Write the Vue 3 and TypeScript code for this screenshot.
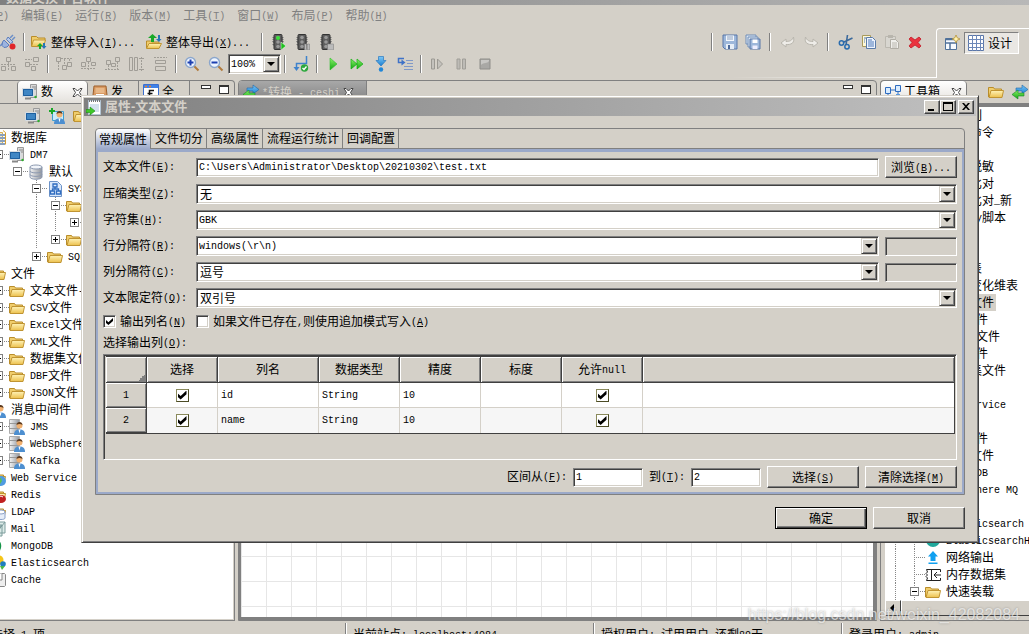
<script setup lang="ts">
import { h, ref, type FunctionalComponent } from 'vue'

/** Mixed CJK / Latin text; "&" marks the mnemonic letter that follows it. */
const Txt: FunctionalComponent<{ t: string }> = (props) =>
  h(
    'span',
    { class: 'txt' },
    props.t
      .split(/([\x20-\x7e]+)/)
      .filter((s) => s.length > 0)
      .map((s) => {
        if (!/^[\x20-\x7e]/.test(s)) return s
        const i = s.indexOf('&')
        return h('span', { class: 'lat' }, i < 0 ? s : [s.slice(0, i), h('u', s[i + 1]), s.slice(i + 2)])
      }),
  )
Txt.props = ['t']

const Ic: FunctionalComponent<{ n: string }> = (props) =>
  h('svg', { class: 'ic', viewBox: '0 0 16 16', 'aria-hidden': 'true' }, [h('use', { href: '#i-' + props.n })])
Ic.props = ['n']

interface Node { d: number; t: string; icon: string; exp?: string; g?: number[]; sel?: boolean; line?: boolean }

const menus = ['文件(&P)', '编辑(&E)', '运行(&R)', '版本(&M)', '工具(&T)', '窗口(&W)', '布局(&P)', '帮助(&H)']
const alignIcons = ['al3', 'al4', 'al5', 'al6', 'al7']
const runIcons = ['play', 'ff', 'down', 'step']
const haltIcons = ['resume', 'pause', 'stop']

const source: Node[] = [
  { d: 0, t: '数据库', icon: 'db' },
  { d: 1, t: 'DM7', icon: 'pc', exp: '-' },
  { d: 2, t: '默认', icon: 'disk', exp: '-' },
  { d: 3, t: 'SYSDBA', icon: 'schema', exp: '-', line: true },
  { d: 4, t: '表', icon: 'folder', exp: '-', g: [3], line: true },
  { d: 5, t: '', icon: 'folder', exp: '+', g: [3, 4] },
  { d: 4, t: '视图', icon: 'folder', exp: '+', g: [3] },
  { d: 3, t: 'SQL', icon: 'folder', exp: '+' },
  { d: 0, t: '文件', icon: 'folder' },
  { d: 1, t: '文本文件-GBK', icon: 'folder', exp: '+' },
  { d: 1, t: 'CSV文件', icon: 'folder', exp: '+' },
  { d: 1, t: 'Excel文件', icon: 'folder', exp: '+' },
  { d: 1, t: 'XML文件', icon: 'folder', exp: '+' },
  { d: 1, t: '数据集文件', icon: 'folder', exp: '+' },
  { d: 1, t: 'DBF文件', icon: 'folder', exp: '+' },
  { d: 1, t: 'JSON文件', icon: 'folder', exp: '+' },
  { d: 0, t: '消息中间件', icon: 'user' },
  { d: 1, t: 'JMS', icon: 'srvuser', exp: '+' },
  { d: 1, t: 'WebSphere MQ', icon: 'srvuser', exp: '+' },
  { d: 1, t: 'Kafka', icon: 'srvuser', exp: '+' },
  { d: 0, t: 'Web Service', icon: 'web' },
  { d: 0, t: 'Redis', icon: 'redis' },
  { d: 0, t: 'LDAP', icon: 'ldap' },
  { d: 0, t: 'Mail', icon: 'mail' },
  { d: 0, t: 'MongoDB', icon: 'mongo' },
  { d: 0, t: 'Elasticsearch', icon: 'elastic' },
  { d: 0, t: 'Cache', icon: 'cache' },
]

const toolNames = ['多序列', '系统命令', '合并', '数据脱敏', '数据比对', '数据比对_新', 'Groovy脚本', '过滤', '汇总', '维度表',
  '缓慢变化维表', '文本文件', 'CSV文件', 'Excel文件', 'XML文件', '数据集文件', 'LDAP', 'WebService', 'Redis', 'XML文件',
  'JSON文件', 'MongoDB', 'WebSphere MQ', 'Kafka', 'Elasticsearch', 'ElasticsearchHttp', '网络输出', '内存数据集', '快速装载']
const toolIcon: Record<string, string> = { 网络输出: 'upload', 内存数据集: 'memory', 快速装载: 'folder', ElasticsearchHttp: 'teal' }
const tools: Node[] = toolNames.map((t, i) => ({
  d: 1, t, icon: toolIcon[t] ?? 'page', g: [0], line: true, sel: t === '文本文件', exp: i === toolNames.length - 1 ? '-' : '',
}))

const tabs = ['常规属性', '文件切分', '高级属性', '流程运行统计', '回调配置']
const activeTab = ref(0)
const path = ref('C:\\Users\\Administrator\\Desktop\\20210302\\test.txt')
const combos = ref([
  { id: 'zip', label: '压缩类型(&Z):', value: '无', extra: false },
  { id: 'charset', label: '字符集(&H):', value: 'GBK', extra: false },
  { id: 'rowsep', label: '行分隔符(&R):', value: 'windows(\\r\\n)', extra: true },
  { id: 'colsep', label: '列分隔符(&C):', value: '逗号', extra: true },
  { id: 'quote', label: '文本限定符(&Q):', value: '双引号', extra: false },
])
const outNames = ref(true)
const append = ref(false)
const heads = ['选择', '列名', '数据类型', '精度', '标度', '允许null']
const rows = ref([
  { on: true, name: 'id', type: 'String', len: '10', scale: '', nul: true },
  { on: true, name: 'name', type: 'String', len: '10', scale: '', nul: true },
])
const from = ref('1')
const to = ref('2')
const isLatin = (s: string) => /^[\x20-\x7e]+$/.test(s)
</script>

<template>
  <div class="app">
    <svg class="defs" aria-hidden="true">
      <defs>
        <linearGradient id="gy" x1="0" y1="0" x2="0" y2="1"><stop offset="0" stop-color="#fff3b8" /><stop offset="1" stop-color="#ecc04c" /></linearGradient>
        <linearGradient id="gg" x1="0" y1="0" x2="0" y2="1"><stop offset="0" stop-color="#8bf06a" /><stop offset="1" stop-color="#12a812" /></linearGradient>
        <linearGradient id="gb" x1="0" y1="0" x2="0" y2="1"><stop offset="0" stop-color="#7cc8f8" /><stop offset="1" stop-color="#1b7fd0" /></linearGradient>
        <linearGradient id="gs" x1="0" y1="0" x2="1" y2="0"><stop offset="0" stop-color="#f4f4f4" /><stop offset="1" stop-color="#8f949c" /></linearGradient>
      </defs>
      <symbol id="i-folder" viewBox="0 0 16 16"><path d="M.500 13V3.500h5l1 1.500h7V8" fill="#f0cd6c" stroke="#b98d2b" /><path d="M1 13.500L3 6.500h12.500L14 13.500z" fill="url(#gy)" stroke="#c09432" /></symbol>
      <symbol id="i-import" viewBox="0 0 16 16"><path d="M.500 12V2.500h5L7 4h7v2" fill="#f0cd6c" stroke="#b98d2b" /><path d="M.500 12.500L2.500 6h12l-2 6.500z" fill="url(#gy)" stroke="#c09432" /><path d="M9 9l3 3h-2v3H8v-3H6z" fill="#18a828" /><path d="M13 15l-2.500-3H12V9h2v3h1.500z" fill="#2676b8" /></symbol>
      <symbol id="i-export" viewBox="0 0 16 16"><path d="M.500 14V7h4L6 8h7v1.500" fill="#f0cd6c" stroke="#b98d2b" /><path d="M.500 14.500L3 9.500h12.500L13 14.500z" fill="url(#gy)" stroke="#c09432" /><path d="M6.500 0L11 4H8v4H5V4H2z" fill="#18a828" /><path d="M13 8l-3-3h2V1h2v4h1.500z" fill="#2676b8" /></symbol>
      <symbol id="i-plug" viewBox="0 0 16 16"><path d="M0 12l3-3M6 2M13 1l-3 3M15 3l-3 3" stroke="#6c8fc8" stroke-width="1.500" /><path d="M8 3l5 5-2.500 1.500-4-4z" fill="#b7c9ea" stroke="#5d7dba" /><path d="M4 6l5 5-2 2-3 .500-2-2L2.500 8z" fill="#9cb4e0" stroke="#5d7dba" /><circle cx="12.500" cy="12.500" r="3" fill="#e0252a" /></symbol>
      <symbol id="i-light" viewBox="0 0 16 16"><path d="M2 3h12l-2 2h2l-2 2h2l-2 3h2l-2 2H4L2 10h2L2 7h2L2 5h2z" fill="#777" /><rect x="4" y=".5" width="8" height="15" rx="1" fill="#5d5d5d" stroke="#333" /><circle cx="8" cy="3.500" r="1.800" fill="#999" /><circle cx="8" cy="8" r="1.800" fill="#999" /><circle cx="8" cy="12.500" r="1.800" fill="#999" /></symbol>
      <symbol id="i-light1" viewBox="0 0 16 16"><use href="#i-light" /><circle cx="8" cy="4" r="2" fill="#38e038" /><path d="M11 8l5 4-5 4z" fill="#1fc01f" stroke="#fff" stroke-width=".5" /></symbol>
      <symbol id="i-light2" viewBox="0 0 16 16"><use href="#i-light" /><path d="M10.500 10h2v6h-2zM13.500 10h2v6h-2z" fill="#bbb" stroke="#777" stroke-width=".5" /></symbol>
      <symbol id="i-light3" viewBox="0 0 16 16"><use href="#i-light" /><rect x="9.500" y="10" width="6" height="6" fill="#bbb" stroke="#777" stroke-width=".5" /></symbol>
      <symbol id="i-save" viewBox="0 0 16 16"><path d="M1 1h14v14H3l-2-2z" fill="#9db7da" stroke="#5876a8" /><rect x="4" y="1.500" width="8" height="5.500" fill="#f3f7fc" /><path d="M5 3h6M5 5h6" stroke="#8ca0bf" /><rect x="4" y="10" width="8" height="5" fill="#e7eef6" /><rect x="6" y="11" width="2" height="4" fill="#4b6899" /></symbol>
      <symbol id="i-saveall" viewBox="0 0 16 16"><path d="M1 1h10v9H1z" fill="#dce6f2" stroke="#6f8db8" /><path d="M3 3h10v10H3z" fill="#dce6f2" stroke="#6f8db8" /><path d="M5 5h10v10H5z" fill="#9db7da" stroke="#5876a8" /><path d="M7.500 5.500h5V9h-5z" fill="#fff" /><path d="M7.500 11.500h5V15h-5z" fill="#eef" /></symbol>
      <symbol id="i-undo" viewBox="0 0 16 16"><path d="M1 9l5-4v2.500c4 0 6-1 7.500-4.500C15 9 11 11 6 10.500V13z" fill="#eeece8" stroke="#b9b6ae" /></symbol>
      <symbol id="i-redo" viewBox="0 0 16 16"><path d="M15 9l-5-4v2.500c-4 0-6-1-7.500-4.500C1 9 5 11 10 10.500V13z" fill="#eeece8" stroke="#b9b6ae" /></symbol>
      <symbol id="i-cut" viewBox="0 0 16 16"><path d="M9.500 1L8 11M14.500 4L5 8.500" stroke="#3c6a9c" stroke-width="1.600" /><circle cx="3.500" cy="9" r="2.200" fill="none" stroke="#2a6cae" stroke-width="1.500" /><circle cx="9" cy="12.700" r="2.200" fill="none" stroke="#2a6cae" stroke-width="1.500" /></symbol>
      <symbol id="i-copy" viewBox="0 0 16 16"><path d="M1.500 1.500h8v11h-8z" fill="#fff8d8" stroke="#a89a5c" /><path d="M5.500 3.500h6l3 3v8h-9z" fill="#eef4ff" stroke="#5a7ba8" /><path d="M7 6h4M7 8h6M7 10h6M7 12h6M3 4h2M3 6h1M3 8h1" stroke="#4d79b8" /></symbol>
      <symbol id="i-paste" viewBox="0 0 16 16"><path d="M1.500 2.500h10v11h-10z" fill="#d8d6d0" stroke="#bbb8b0" /><path d="M4 1h5v3H4z" fill="#b8b5ad" /><path d="M6.500 5.500h5l3 3v6h-8z" fill="#f0efec" stroke="#b0ada5" /><path d="M8 9h5M8 11h5M8 13h5" stroke="#b9b6ae" /></symbol>
      <symbol id="i-del" viewBox="0 0 16 16"><path d="M4 3l4 3 4-3 2 2-3 3.500 3 3.500-2 2-4-3-4 3-2-2 3-3.500L2 5z" fill="#ea3440" stroke="#c01c28" stroke-width=".8" /></symbol>
      <symbol id="i-persp" viewBox="0 0 16 16"><path d="M1.500 3.500h11v11h-11z" fill="#f8fbff" stroke="#50729a" /><path d="M1 4.500h12M1.500 8h11M6 8v6.500" stroke="#50729a" stroke-width="1.500" /><path d="M12 0l1.200 2.800L16 4l-2.800 1.200L12 8l-1.200-2.800L8 4l2.800-1.200z" fill="#fff2b0" stroke="#b08a28" stroke-width=".7" /></symbol>
      <symbol id="i-grid" viewBox="0 0 16 16"><path d="M.500.500h15v15H.500z" fill="#fff" stroke="#5b76a8" /><path d="M4.500 0v16M8.500 0v16M12.500 0v16M0 4.500h16M0 8.500h16M0 12.500h16" stroke="#6d88b8" /></symbol>
      <symbol id="i-al1" viewBox="0 0 16 16"><g fill="none" stroke="#a09d96"><path d="M6.500 1.500h4v4h-4zM1.500 10.500h4v4h-4zM11.500 10.500h4v4h-4z" /><path d="M1 8.500h14M8.500 6v9" stroke-dasharray="2 1" /></g></symbol>
      <symbol id="i-al2" viewBox="0 0 16 16"><g fill="none" stroke="#a09d96"><path d="M9.500 1.500h5v4h-5zM1.500 6.500h4v4h-4zM7.500 10.500h4v4h-4z" /><path d="M6 8.500h9M1 3.500h7" stroke-dasharray="2 1" /></g></symbol>
      <symbol id="i-al3" viewBox="0 0 16 16"><g fill="none" stroke="#a09d96"><path d="M.500 1.500h4v4h-4zM6.500 9.500h4v4h-4zM11.500 6.500h4v4h-4z" /><path d="M5 2.500h11M2.500 6v9M13.500 3v3M8.500 3v6" stroke-dasharray="2 1" /></g></symbol>
      <symbol id="i-al4" viewBox="0 0 16 16"><g fill="none" stroke="#a09d96"><path d="M6.500 1.500h4v4h-4zM1.500 6.500h4v4h-4zM11.500 6.500h4v3h-4z" /><path d="M1 12.500h15M8.500 6v9" stroke-dasharray="2 1" /></g></symbol>
      <symbol id="i-al5" viewBox="0 0 16 16"><g fill="none" stroke="#a09d96"><path d="M2.500 4.500h4v4h-4zM11.500 1.500h4v4h-4zM7.500 7.500h4v3h-4z" /><path d="M1 13.500h15M4.500 9v5M13.500 6v8" stroke-dasharray="2 1" /></g></symbol>
      <symbol id="i-al6" viewBox="0 0 16 16"><g fill="none" stroke="#a09d96"><path d="M1.500 1.500h3v13h-3zM6.500 1.500h3v13h-3z" /><path d="M13.500 1v14M11 2.500h5M11 13.500h5" stroke-dasharray="2 1" /></g></symbol>
      <symbol id="i-al7" viewBox="0 0 16 16"><g fill="none" stroke="#a09d96"><path d="M3.500 4.500h10v3h-10zM3.500 10.500h10v4h-10z" /><path d="M2 1.500h13" stroke-dasharray="2 1" /></g></symbol>
      <symbol id="i-zin" viewBox="0 0 16 16"><path d="M9.500 9.500l5 5" stroke="#b07a3c" stroke-width="2" /><circle cx="6.500" cy="6.500" r="5" fill="#eef5ff" stroke="#8ba6cc" stroke-width="1.400" /><path d="M3.500 6.500h6M6.500 3.500v6" stroke="#1c3fb0" stroke-width="2" /></symbol>
      <symbol id="i-zout" viewBox="0 0 16 16"><path d="M9.500 9.500l5 5" stroke="#b07a3c" stroke-width="2" /><circle cx="6.500" cy="6.500" r="5" fill="#eef5ff" stroke="#8ba6cc" stroke-width="1.400" /><path d="M3.500 6.500h6" stroke="#1c3fb0" stroke-width="2" /></symbol>
      <symbol id="i-route" viewBox="0 0 16 16"><path d="M13.500 0v7.500h-10V12" fill="none" stroke="#3f82cc" stroke-width="1.500" /><path d="M.500 11h6l-3 4z" fill="#3f82cc" /><circle cx="11.500" cy="12" r="3.700" fill="#2ca83c" /><path d="M9.500 12l1.500 1.500 2.500-3" fill="none" stroke="#fff" stroke-width="1.300" /></symbol>
      <symbol id="i-play" viewBox="0 0 16 16"><path d="M5 2l7 6-7 6z" fill="url(#gg)" stroke="#2cc02c" stroke-width=".6" /></symbol>
      <symbol id="i-ff" viewBox="0 0 16 16"><path d="M2 3l6 5-6 5zM8 3l6 5-6 5z" fill="url(#gg)" stroke="#12b012" stroke-width=".7" /></symbol>
      <symbol id="i-down" viewBox="0 0 16 16"><path d="M5.500.500h5v4H13L8 10 3 4.500h2.500z" fill="url(#gb)" stroke="#2a78c0" stroke-width=".7" /><circle cx="8" cy="13.500" r="2.200" fill="#1f86d8" /></symbol>
      <symbol id="i-step" viewBox="0 0 16 16"><path d="M7 2.500H1.500v4H5" fill="none" stroke="#3f72c8" stroke-width="1.500" /><path d="M4.500 3.500l4 3-4 3z" fill="#3f72c8" /><path d="M9 4.500h7M10 7.500h6M7 10.500h9M7 13.500h9" stroke="#8099c8" /></symbol>
      <symbol id="i-resume" viewBox="0 0 16 16"><path d="M2.500 3h3v10h-3zM8.500 3l5 5-5 5z" fill="#c4c2bd" stroke="#9b9993" /></symbol>
      <symbol id="i-pause" viewBox="0 0 16 16"><path d="M4 3h3v10H4zM9.500 3h3v10h-3z" fill="#bdbbb6" stroke="#a09e98" /></symbol>
      <symbol id="i-stop" viewBox="0 0 16 16"><path d="M3 3h10v10H3z" fill="#a9a8a5" stroke="#8f8e8a" /><path d="M4 9c3-3 6-1 8-4V4H4z" fill="#c8c7c4" /></symbol>
      <symbol id="i-pc" viewBox="0 0 16 16"><path d="M8.500.500h6v13h-6z" fill="#d9d9d9" stroke="#9a9a9a" /><path d="M10 3h4M10 5h4" stroke="#888" /><path d="M.500 4.500h11v8H.500z" fill="#3f86c4" stroke="#d8dde2" /><path d="M1.500 5.500h9v6h-9z" fill="none" stroke="#1e5f9e" /><path d="M3 14.500h6" stroke="#888" stroke-width="2" /><circle cx="13.500" cy="13" r="1.200" fill="#2db02d" /></symbol>
      <symbol id="i-adduser" viewBox="0 0 16 16"><path d="M3.500 3.500h11v9h-11z" fill="#c9ecfa" stroke="#3d9ed0" /><use href="#i-man" /><path d="M3 0v6M0 3h6" stroke="#18a828" stroke-width="2" /></symbol>
      <symbol id="i-man" viewBox="0 0 16 16"><circle cx="10.500" cy="6.500" r="3" fill="#f0b070" /><path d="M7.500 6c0-4 6-4 6 0-2-1.500-4-1.500-6 0z" fill="#5a3a20" /><path d="M5 16c0-4 2-5.500 5.500-5.500S16 12 16 16z" fill="#4d8fd0" /><path d="M9.500 10.500h2l-1 4z" fill="#fff" /></symbol>
      <symbol id="i-user" viewBox="0 0 16 16"><use href="#i-man" /></symbol>
      <symbol id="i-srvuser" viewBox="0 0 16 16"><path d="M.500.500h10v14h-10z" fill="url(#gs)" stroke="#aaa" /><path d="M0 4.500h11M0 9.500h11" stroke="#999" /><use href="#i-man" /></symbol>
      <symbol id="i-db" viewBox="0 0 16 16"><path d="M5.500 2.500h7v12h-7z" fill="#f6ecc8" stroke="#d8b050" /><path d="M9 5h6M9 8h6M9 11h6M9 14h6" stroke="#8aa0bc" stroke-width="2" /><path d="M13 .500l2.500 2v12" stroke="#d8a030" fill="none" /></symbol>
      <symbol id="i-disk" viewBox="0 0 16 16"><path d="M2 3v10c0 3 12 3 12 0V3z" fill="url(#gs)" stroke="#8c99b0" /><ellipse cx="8" cy="3" rx="6" ry="2" fill="#f2f5fa" stroke="#8c99b0" /><path d="M2 7c0 2.500 12 2.500 12 0M2 10.500c0 2.500 12 2.500 12 0" fill="none" stroke="#8c99b0" /></symbol>
      <symbol id="i-schema" viewBox="0 0 16 16"><path d="M2.500.500h8l4 4v11h-12z" fill="#dbe9fb" stroke="#6d93c8" /><path d="M6 3h4v3H6zM3.500 10h4v3h-4zM9.500 10h4v3h-4zM8 6v2M5.500 10V8h6v2" fill="none" stroke="#2f6cc0" stroke-width="1.300" /></symbol>
      <symbol id="i-web" viewBox="0 0 16 16"><use href="#i-folder" /><circle cx="11" cy="11" r="5" fill="#4f9be0" /><path d="M8 9l3-1 1 3-2 3z" fill="#5fc04f" /></symbol>
      <symbol id="i-redis" viewBox="0 0 16 16"><use href="#i-folder" /><ellipse cx="11" cy="12" rx="5" ry="4" fill="#c02020" /><path d="M8 10l3-1 2 1" stroke="#fff" fill="none" /></symbol>
      <symbol id="i-ldap" viewBox="0 0 16 16"><use href="#i-folder" /><path d="M7 8v6c0 2 8 2 8 0V8" fill="#e6edf8" stroke="#8aa0c8" /><ellipse cx="11" cy="8" rx="4" ry="2" fill="#fff" stroke="#8aa0c8" /></symbol>
      <symbol id="i-mail" viewBox="0 0 16 16"><path d="M8 1h7v11H8zM5 4h7v11H5z" fill="#dcebe8" stroke="#7d9c9c" /><path d="M8 1l3 5 4-5M5 4l4 5 3-5" fill="none" stroke="#7d9c9c" /></symbol>
      <symbol id="i-mongo" viewBox="0 0 16 16"><path d="M9 2c3 4 3 8 0 12-3-4-3-8 0-12z" fill="#159448" /></symbol>
      <symbol id="i-elastic" viewBox="0 0 16 16"><circle cx="9" cy="5" r="4.500" fill="#f5c518" /><circle cx="13" cy="9" r="2.800" fill="#1f7fc0" /><path d="M10 11h5l-3 4z" fill="#4cb848" /></symbol>
      <symbol id="i-cache" viewBox="0 0 16 16"><path d="M2.500 1.500h12l1 1v11l-1 1h-12z" fill="#eee" stroke="#888" /><path d="M6 1.500V8h6V1.500" fill="#fff" stroke="#888" /></symbol>
      <symbol id="i-page" viewBox="0 0 16 16"><path d="M2.500.500h11v15h-11z" fill="#f4f9ff" stroke="#8ba8c8" /><path d="M4 4h8M4 7h8M4 10h8" stroke="#8ba8c8" /></symbol>
      <symbol id="i-teal" viewBox="0 0 16 16"><circle cx="8" cy="7" r="7" fill="#1fa89c" /><path d="M2 8h12" stroke="#f0c020" stroke-width="2" /></symbol>
      <symbol id="i-upload" viewBox="0 0 16 16"><path d="M8 1l5 5.500h-2.500V11h-5V6.500H3zM3.500 12.500h9v1.500h-9z" fill="#10a0f0" /></symbol>
      <symbol id="i-memory" viewBox="0 0 16 16"><path d="M15.500 5V2.500h-14L2.500 5 1 6.500 2.500 8 1 9.500 2.500 11l-1 2.500h14V11" fill="#fff" stroke="#222" /><path d="M6.500 2.500v11M9 8h7M12 5L9 8l3 3" fill="none" stroke="#222" /></symbol>
      <symbol id="i-sync" viewBox="0 0 16 16"><path d="M4 4h6V1l6 4.500L10 10V7H4z" fill="url(#gb)" stroke="#1d66a8" stroke-width=".6" /><path d="M12 9H6V6L0 10.500 6 15v-3h6z" fill="url(#gg)" stroke="#18882a" stroke-width=".6" /></symbol>
      <symbol id="i-box" viewBox="0 0 16 16"><path d="M2 2h12l1 9v3H1v-3z" fill="#d99a62" stroke="#9c5f2c" /><path d="M3.500 4h9v5h-9z" fill="#e8b888" /><path d="M4 10h8v2H4z" fill="#fff" /></symbol>
      <symbol id="i-func" viewBox="0 0 16 16"><path d="M.500.500h15v15H.500z" fill="#fff" stroke="#3b6fd0" /><path d="M1 1h14v3H1z" fill="#3f82e8" /><path d="M2 2.500h2M6 2.500h2" stroke="#f08020" stroke-width="1.500" /><path d="M11 6.500H6.500V14M4.500 9.500h5" fill="none" stroke="#111" stroke-width="1.500" /></symbol>
      <symbol id="i-link" viewBox="0 0 16 16"><path d="M.500 3.500h5v6h-5zM10.500 1.500h5v6h-5zM5.500 6h5" fill="#d9ecff" stroke="#2e6cc0" /><path d="M3 10v3h3M13 8v3" fill="none" stroke="#2e6cc0" /><path d="M6 11h4v4H6zM11 10h4v2h-4z" fill="#5a9ae0" /></symbol>
      <symbol id="i-note" viewBox="0 0 16 16"><path d="M2.500 1.500h12v14h-12z" fill="#fff" stroke="#b4c6d4" /><path d="M3 2h11" stroke="#777" stroke-dasharray="1 1" stroke-width="2" /><path d="M4 6h9M4 8h9M4 10h9M4 12h9" stroke="#a8c4dc" /><path d="M0 10.500h4V8l5 4-5 4v-2.500H0z" fill="#3fc828" stroke="#1e8a18" stroke-width=".6" /></symbol>
    </svg>

    <header class="appbar"><Txt t="数据交换平台软件" /></header>
    <nav class="menu"><button v-for="m in menus" :key="m" type="button"><Txt :t="m" /></button></nav>

    <div class="coolbar">
      <div class="bars">
        <div class="bar">
          <button type="button" class="tb" aria-label="连接"><Ic n="plug" /></button><i class="sep" />
          <button type="button" class="tb wide"><Ic n="import" /><Txt t="整体导入(&I)..." /></button>
          <button type="button" class="tb wide"><Ic n="export" /><Txt t="整体导出(&X)..." /></button><i class="sep" />
          <button v-for="n in ['light1', 'light2', 'light3']" :key="n" type="button" class="tb" :aria-label="n"><Ic :n="n" /></button>
          <div class="edit">
            <i class="sep" />
            <button type="button" class="tb" aria-label="保存"><Ic n="save" /></button>
            <button type="button" class="tb" aria-label="全部保存"><Ic n="saveall" /></button><i class="sep" />
            <button type="button" class="tb" aria-label="撤销"><Ic n="undo" /></button>
            <button type="button" class="tb" aria-label="重做"><Ic n="redo" /></button><i class="sep" />
            <button type="button" class="tb" aria-label="剪切"><Ic n="cut" /></button>
            <button type="button" class="tb" aria-label="复制"><Ic n="copy" /></button>
            <button type="button" class="tb" aria-label="粘贴"><Ic n="paste" /></button>
            <button type="button" class="tb" aria-label="删除"><Ic n="del" /></button>
          </div>
        </div>
        <div class="bar">
          <button type="button" class="tb" aria-label="对齐"><Ic n="al1" /></button>
          <button type="button" class="tb" aria-label="分布"><Ic n="al2" /></button><i class="sep" />
          <button v-for="n in alignIcons" :key="n" type="button" class="tb" :aria-label="n"><Ic :n="n" /></button><i class="sep" />
          <button type="button" class="tb" aria-label="放大"><Ic n="zin" /></button>
          <button type="button" class="tb" aria-label="缩小"><Ic n="zout" /></button>
          <div class="combo zoom"><select class="lat" aria-label="缩放"><option>100%</option></select><i class="arrow" /></div><i class="sep" />
          <button type="button" class="tb" aria-label="路由"><Ic n="route" /></button><i class="sep" />
          <button v-for="n in runIcons" :key="n" type="button" class="tb" :aria-label="n"><Ic :n="n" /></button><i class="sep" />
          <button v-for="n in haltIcons" :key="n" type="button" class="tb" :aria-label="n"><Ic :n="n" /></button>
        </div>
      </div>
      <div class="persp">
        <button type="button" class="tb" aria-label="打开透视图"><Ic n="persp" /></button>
        <button type="button" class="design"><Ic n="grid" /><Txt t="设计" /></button>
      </div>
    </div>

    <main class="bench">
      <section class="pane left">
        <div class="ptabs">
          <span class="stub" />
          <span class="ptab on"><Ic n="pc" /><b>数</b><svg class="x" viewBox="0 0 11 11"><path d="M1 1.500h2l2.500 2.500L8 1.500h2L7.500 5.500l2.500 4H8L5.500 7 3 9.500H1l2.500-4z" fill="#fff" stroke="#444" /></svg></span>
          <span class="ptab"><Ic n="box" /><b>发</b></span>
          <span class="ptab"><Ic n="func" /><b>全</b></span>
          <span class="winbtns"><i class="mini" /><i class="maxi" /></span>
        </div>
        <div class="ptools"><Ic n="pc" /><Ic n="adduser" /><Ic n="folder" /></div>
        <div class="tree src">
          <div v-for="(r, i) in source" :key="i" class="row">
            <span v-for="k in r.d" :key="k" class="cell" :class="{ guide: r.g?.includes(k - 1) }" />
            <span class="elbow" :class="{ plain: r.d === 0, guide: r.line }"><i v-if="r.exp" class="exp" :class="{ plus: r.exp === '+' }" /></span>
            <Ic :n="r.icon" /><span class="lbl"><Txt :t="r.t" /></span>
          </div>
        </div>
      </section>

      <section class="pane mid">
        <div class="ptabs">
          <span class="ptab ed"><Ic n="sync" /><Txt t="*转换 - ceshi" /><svg class="x" viewBox="0 0 11 11"><path d="M1 1.500h2l2.500 2.500L8 1.500h2L7.500 5.500l2.500 4H8L5.500 7 3 9.500H1l2.500-4z" fill="#fff" stroke="#444" /></svg></span>
          <span class="winbtns"><i class="mini" /><i class="maxi" /></span>
        </div>
        <div class="canvas" />
      </section>

      <section class="pane right">
        <div class="ptabs">
          <span class="ptab on"><Ic n="link" /><b>工具箱</b><svg class="x" viewBox="0 0 11 11"><path d="M1 1.500h2l2.500 2.500L8 1.500h2L7.500 5.500l2.500 4H8L5.500 7 3 9.500H1l2.500-4z" fill="#fff" stroke="#444" /></svg></span>
          <span class="rtools"><Ic n="folder" /><Ic n="sync" /></span>
        </div>
        <div class="tree tool">
          <div v-for="(r, i) in tools" :key="i" class="row">
            <span v-for="k in r.d" :key="k" class="cell" :class="{ guide: r.g?.includes(k - 1) }" />
            <span class="elbow" :class="{ guide: r.line }"><i v-if="r.exp" class="exp" /></span>
            <Ic :n="r.icon" /><span class="lbl" :class="{ sel: r.sel }"><Txt :t="r.t" /></span>
          </div>
        </div>
        <div class="hscroll"><i class="sb" /><i class="thumb" /></div>
      </section>
    </main>

    <footer class="status">
      <span><Txt t="选择 1 项" /></span>
      <span><Txt t="当前站点: localhost:4084" /></span>
      <span><Txt t="授权用户: 试用用户 还剩89天" /></span>
      <span><Txt t="登录用户: admin" /></span>
    </footer>

    <section class="dialog" role="dialog" aria-label="属性-文本文件">
      <div class="title">
        <Ic n="note" /><h1>属性-文本文件</h1>
        <button type="button" class="cap" aria-label="最小化"><svg viewBox="0 0 12 10"><path d="M2 7h6v2H2z" /></svg></button>
        <button type="button" class="cap" aria-label="最大化"><svg viewBox="0 0 12 10"><path d="M1 0h10v9H1zM2 2v6h8V2z" fill-rule="evenodd" /></svg></button>
        <button type="button" class="cap close" aria-label="关闭"><svg viewBox="0 0 12 10"><path d="M2 1h2l2 2.200L8 1h2L7 4.500 10 8H8L6 5.800 4 8H2l3-3.500z" /></svg></button>
      </div>
      <div class="folder">
        <div class="tabs" role="tablist">
          <button v-for="(t, i) in tabs" :key="t" type="button" role="tab" :class="{ on: i === activeTab }" :aria-selected="i === activeTab" @click="activeTab = i">{{ t }}</button>
        </div>
        <form class="body" @submit.prevent>
          <div class="fields">
            <label for="path"><Txt t="文本文件(&E):" /></label>
            <input id="path" v-model="path" type="text" class="box lat" />
            <button type="button" class="btn"><Txt t="浏览(&B)..." /></button>
            <template v-for="c in combos" :key="c.id">
              <label :for="c.id"><Txt :t="c.label" /></label>
              <div class="combo" :class="{ full: !c.extra }">
                <select :id="c.id" v-model="c.value" :class="{ lat: isLatin(c.value) }"><option>{{ c.value }}</option></select><i class="arrow" />
              </div>
              <input v-if="c.extra" type="text" class="box off" disabled :aria-label="c.value" />
            </template>
          </div>
          <div class="checks">
            <label><input v-model="outNames" type="checkbox" /><Txt t="输出列名(&N)" /></label>
            <label><input v-model="append" type="checkbox" /><Txt t="如果文件已存在,则使用追加模式写入(&A)" /></label>
          </div>
          <div class="cap-line"><Txt t="选择输出列(&O):" /></div>
          <div class="tablebox">
            <table>
              <colgroup><col class="c0" /><col class="c1" /><col class="c2" /><col class="c3" /><col class="c3" /><col class="c3" /><col class="c3" /><col /></colgroup>
              <thead><tr><th class="corner" /><th v-for="x in heads" :key="x"><Txt :t="x" /></th><th /></tr></thead>
              <tbody>
                <tr v-for="(r, i) in rows" :key="i">
                  <th class="lat">{{ i + 1 }}</th>
                  <td class="ctr"><input v-model="r.on" type="checkbox" :aria-label="'选择 ' + r.name" /></td>
                  <td class="lat">{{ r.name }}</td><td class="lat">{{ r.type }}</td><td class="lat">{{ r.len }}</td><td>{{ r.scale }}</td>
                  <td class="ctr"><input v-model="r.nul" type="checkbox" :aria-label="'允许null ' + r.name" /></td><td />
                </tr>
              </tbody>
            </table>
          </div>
          <div class="range">
            <label for="from"><Txt t="区间从(&F):" /></label><input id="from" v-model="from" type="text" class="box lat" />
            <label for="to"><Txt t="到(&T):" /></label><input id="to" v-model="to" type="text" class="box lat" />
            <button type="button" class="btn"><Txt t="选择(&S)" /></button>
            <button type="button" class="btn"><Txt t="清除选择(&M)" /></button>
          </div>
        </form>
      </div>
      <div class="actions">
        <button type="button" class="btn def"><Txt t="确定" /></button>
        <button type="button" class="btn"><Txt t="取消" /></button>
      </div>
    </section>

    <div class="mark">https://blog.csdn.net/weixin_42082084</div>
  </div>
</template>

<style>
html, body { margin: 0; background: #d4d0c8; }
.txt { display: inline-block; white-space: pre; line-height: 15px; padding-top: 2px; }
.lat { font-family: "Liberation Mono", monospace; font-size: 10px; }
.txt .lat { vertical-align: 1px; }
.ic { width: 16px; height: 16px; flex: none; display: block; }
</style>

<style scoped>
.app { position: relative; height: 100vh; overflow: hidden; display: flex; flex-direction: column; background: #d4d0c8; color: #000; font: 12px/17px "Liberation Sans", "Noto Sans CJK SC", sans-serif; }
.app * { box-sizing: border-box; }
.defs { position: absolute; width: 0; height: 0; }
button, input, select { font-family: "Liberation Sans", "Noto Sans CJK SC", sans-serif; font-size: 12px; color: #000; margin: 0; padding: 0; border: 0; border-radius: 0; background: none; }
input.lat, select.lat { font-family: "Liberation Mono", monospace; font-size: 10px; }
button { white-space: nowrap; }

.appbar { flex: none; height: 5px; display: flex; align-items: flex-end; overflow: hidden; padding-left: 6px; font-weight: bold; font-size: 13px; color: #d4d0c8; background: linear-gradient(90deg, #808080, #b8b8b8); }
.menu { flex: none; display: flex; height: 23px; margin-left: -39px; }
.menu button { color: #808080; padding: 0 6px; height: 20px; }

.coolbar { flex: none; display: flex; height: 52px; }
.bars { flex: 1; min-width: 0; display: flex; flex-direction: column; padding: 3px 0 1px; border-bottom: 1px solid transparent; border-image: linear-gradient(90deg, #d4d0c8 78%, #fff) 1; height: 50px; }
.bar { display: flex; align-items: center; height: 22px; margin-left: -4px; }
.tb { flex: none; width: 24px; height: 22px; display: flex; align-items: center; justify-content: center; }
.tb.wide { width: 115px; justify-content: flex-start; gap: 4px; padding-left: 3px; }
.sep { flex: none; width: 2px; height: 18px; margin: 0 3px; border-left: 1px solid #808080; border-right: 1px solid #fff; }
.edit { margin-left: auto; display: flex; align-items: center; padding-right: 10px; }
.edit .tb { width: 23px; }
.edit .sep { margin: 0 5px; }
.persp { display: flex; align-items: flex-start; width: 93px; height: 50px; padding: 3px 0 0 3px; border: solid #fff; border-width: 1px 0 0 1px; border-top-left-radius: 4px; }
.design { display: flex; align-items: center; gap: 4px; width: 55px; height: 22px; padding-left: 3px; border: 1px solid; border-color: #808080 #fff #fff #808080; background: #e9e7e3; }

.combo { position: relative; height: 20px; border: 1px solid; border-color: #808080 #fff #fff #808080; background: #fff; box-shadow: inset 1px 1px #404040, inset -1px -1px #d4d0c8; display: flex; }
.combo select { appearance: none; flex: 1; min-width: 0; padding: 1px 18px 0 3px; outline: none; }
.combo select.lat { padding-top: 0; padding-left: 2px; }
.arrow { position: absolute; right: 1px; top: 1px; width: 16px; height: 16px; border: 1px solid; border-color: #d4d0c8 #404040 #404040 #d4d0c8; background: #d4d0c8; box-shadow: inset 1px 1px #fff, inset -1px -1px #808080; pointer-events: none; }
.arrow::after { content: ""; display: block; width: 0; margin: 5px auto 0; border: solid transparent; border-width: 4px 4px 0; border-top-color: #000; }
.combo.zoom { width: 53px; flex: none; }

.bench { flex: 1; min-height: 0; display: grid; grid-template-columns: 235px minmax(0, 1fr) 149px; gap: 3px; }
.pane { min-width: 0; min-height: 0; display: flex; flex-direction: column; border: 1px solid #808080; border-radius: 4px 4px 0 0; overflow: hidden; }
.left { border-left: 0; border-top-left-radius: 0; }
.right { border-right: 0; border-top-right-radius: 0; }
.ptabs { flex: none; display: flex; height: 23px; border-bottom: 1px solid #808080; }
.stub { width: 17px; }
.ptab { display: flex; align-items: center; gap: 3px; padding: 0 4px; width: 51px; border-right: 1px solid #808080; }
.ptab b { font-weight: normal; flex: 1; font-size: 12px; }
.ptab.on { width: 71px; background: linear-gradient(#fff, #e4e1dc); border-left: 1px solid #808080; border-radius: 4px 4px 0 0; }
.right .ptab.on { width: 86px; border-left: 0; }
.ptab.ed { width: 128px; background: linear-gradient(#a8a8a8, #808080); color: #d4d0c8; }
.x { width: 11px; height: 11px; flex: none; }
.winbtns { display: flex; gap: 8px; margin-left: auto; padding: 4px 5px 0 0; }
.mini { width: 10px; height: 4px; border: 1px solid #333; background: #fff; }
.maxi { width: 10px; height: 9px; border: 1px solid #333; border-top-width: 2px; background: #fff; }
.rtools { display: flex; align-items: center; gap: 8px; margin-left: 21px; }
.ptools { flex: none; display: flex; align-items: center; gap: 8px; height: 25px; padding-left: 25px; border-bottom: 1px solid #808080; }
.tree { flex: 1; min-height: 0; overflow: hidden; background: #fff; }
.src { border-right: 1px solid #d4d0c8; border-bottom: 1px solid #d4d0c8; }
.src .row { margin-left: -25px; }
.tool { margin-left: 4px; padding-left: 6px; border-top: 3px solid #808080; }
.row { display: flex; align-items: center; height: 17px; white-space: nowrap; }
.cell { flex: none; width: 19px; height: 17px; }
.guide { background: repeating-linear-gradient(#888 0 1px, transparent 1px 2px) 4px 0 / 1px 100% no-repeat; }
.elbow { flex: none; position: relative; width: 15px; height: 17px; display: flex; align-items: center; }
.elbow:not(.plain)::before { content: ""; position: absolute; left: 4px; right: 0; top: 8px; height: 1px; background: repeating-linear-gradient(90deg, #888 0 1px, transparent 1px 2px); }
.exp { position: relative; width: 9px; height: 9px; border: 1px solid #808080; background: linear-gradient(#000, #000) center / 5px 1px no-repeat #fff; }
.exp.plus { background: linear-gradient(#000, #000) center / 5px 1px no-repeat, linear-gradient(#000, #000) center / 1px 5px no-repeat #fff; }
.lbl { margin-left: 3px; padding: 0 2px; height: 17px; }
.lbl.sel { background: #d4d0c8; }
.canvas { flex: 1; border: solid #808080; border-width: 0 3px 3px 2px; background: repeating-linear-gradient(90deg, #e6e6e6 0 1px, transparent 1px 25px), repeating-linear-gradient(transparent 0 2px, #e6e6e6 2px 3px, transparent 3px 25px) #fff; }
.hscroll { flex: none; display: flex; height: 16px; margin: 0 0 4px 4px; background: #e9e7e3; }
.sb { width: 16px; border: 1px solid; border-color: #fff #404040 #404040 #fff; background: #d4d0c8; }
.sb::after { content: ""; display: block; width: 0; margin: 3px auto 0 4px; border: solid transparent; border-width: 4px 4px 4px 0; border-right-color: #000; }
.thumb { flex: 1; border: solid; border-width: 1px 0 1px 1px; border-color: #fff #404040 #404040 #fff; background: #d4d0c8; }

.status { flex: none; display: grid; grid-template-columns: 345px 248px 248px 1fr; height: 13px; overflow: hidden; padding-top: 2px; white-space: nowrap; }
.status > span { height: 11px; padding: 3px 0 0 7px; border-left: 1px solid #808080; box-shadow: inset 1px 0 #fff; }
.status > span:first-child { border: 0; box-shadow: none; padding-left: 0; margin-left: -9px; }

.dialog { position: absolute; left: 81px; right: 50px; top: 95px; background: #d4d0c8; border: 1px solid; border-color: #d4d0c8 #404040 #404040 #d4d0c8; box-shadow: inset 1px 1px #fff, inset -1px -1px #808080; padding: 2px 2px 13px; }
.title { display: flex; align-items: center; height: 18px; margin: 0 0 12px; padding: 0 2px; background: linear-gradient(90deg, #808080, #c0c0c0); }
.title h1 { flex: 1; margin: 0 0 0 3px; font-size: 13px; line-height: 18px; color: #d4d0c8; font-weight: bold; }
.cap { width: 16px; height: 14px; background: #d4d0c8; border: 1px solid; border-color: #fff #404040 #404040 #fff; box-shadow: inset -1px -1px #808080; display: flex; align-items: center; justify-content: center; }
.cap.close { margin-left: 2px; }
.cap svg { width: 12px; height: 10px; }
.folder { margin: 0 11px; border: 1px solid #808080; border-radius: 4px 4px 0 0; }
.tabs { display: flex; height: 20px; border-bottom: 1px solid #808080; }
.tabs button { padding: 2px 3px 0 4px; line-height: 17px; border-right: 1px solid #808080; }
.tabs .on { height: 20px; padding: 2px 3px 0; background: linear-gradient(#fff, #9ba9c9); border-radius: 4px 3px 0 0; }
.body { border: solid #9ba9c9; border-width: 3px 2px 2px; padding: 4px 5px 4px 5px; }
.fields { display: grid; grid-template-columns: 93px minmax(0, 1fr) 72px; column-gap: 6px; row-gap: 6px; align-items: center; }
.fields label { margin-right: -6px; }
.fields > .combo, #path { margin-left: -6px; }
.combo.full { grid-column: 2 / 4; }
.box { height: 19px; padding: 0 2px; min-width: 0; background: #fff; border: 1px solid; border-color: #808080 #fff #fff #808080; box-shadow: inset 1px 1px #404040, inset -1px -1px #d4d0c8; outline: none; }
.box.off { background: #d4d0c8; }
.btn { height: 22px; background: #d4d0c8; border: 1px solid; border-color: #fff #404040 #404040 #fff; box-shadow: inset -1px -1px #808080; }
.btn.def { border-color: #000; box-shadow: inset 1px 1px #fff, inset -1px -1px #404040, inset -2px -2px #808080; }
.checks { display: flex; margin-top: 5px; height: 17px; }
.checks label { display: flex; align-items: center; gap: 4px; }
.checks label:first-child { width: 93px; }
input[type="checkbox"] { appearance: none; flex: none; width: 13px; height: 13px; display: block; background: #fff; border: 1px solid; border-color: #808080 #fff #fff #808080; box-shadow: inset 1px 1px #404040, inset -1px -1px #d4d0c8; }
input[type="checkbox"]:checked::before { content: ""; display: block; width: 7px; height: 7px; margin: 2px; background: #000; clip-path: polygon(0 30%, 35% 62%, 100% 0, 100% 42%, 35% 100%, 0 70%); }
td input[type="checkbox"] { margin: 0 auto; border-color: #8a8a5c #4c4c26 #4c4c26 #8a8a5c; box-shadow: none; }
td input[type="checkbox"]:checked::before { width: 9px; height: 9px; margin: 1px; }
.cap-line { margin-top: 4px; height: 20px; }
.tablebox { height: 106px; border: 1px solid; border-color: #808080 #fff #fff #808080; box-shadow: inset 1px 1px #404040; padding: 1px 1px 0 2px; }
table { width: 100%; table-layout: fixed; border-collapse: separate; border-spacing: 0; border-top: 1px solid #404040; border-right: 1px solid #404040; border-bottom: 1px solid #404040; }
.c0 { width: 41px; } .c1 { width: 71px; } .c2 { width: 101px; } .c3 { width: 81px; }
th { font-weight: normal; padding: 0; background: #d4d0c8; border: solid #404040; border-width: 0 1px 1px 0; box-shadow: inset 1px 1px #fff, inset -1px -1px #808080; height: 25px; text-align: center; }
thead th { height: 26px; }
th:last-child { border-right: 0; }
.corner { background: linear-gradient(135deg, transparent 50%, #808080 50%) right bottom / 9px 9px no-repeat #d4d0c8; }
td { height: 25px; padding: 0 3px; background: #fff; border: solid #d4d0c8; border-width: 0 1px 1px 0; }
td:last-child { border-right: 0; }
tr:last-child td { background: #f6f6f6; border-bottom: 0; }
.range { display: flex; align-items: center; justify-content: flex-end; gap: 6px; margin-top: 6px; }
.range .box { width: 70px; }
.range .btn, .actions .btn { width: 92px; }
.actions { display: flex; justify-content: flex-end; gap: 6px; margin: 12px 11px 0; }
.mark { position: absolute; right: 9px; bottom: 9px; font: 16px/20px "Liberation Sans", sans-serif; color: rgba(255, 255, 255, 0.65); text-shadow: 0 0 2px rgba(90, 90, 90, 0.5); }
</style>
